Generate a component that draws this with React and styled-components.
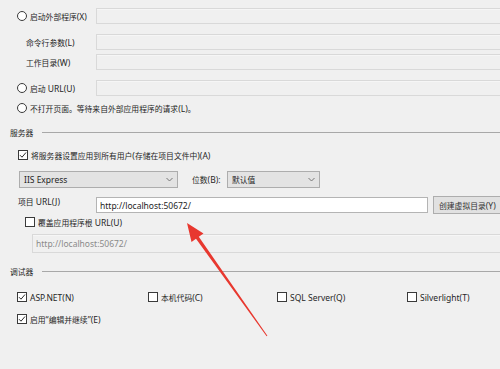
import React from "react";
import styled, { createGlobalStyle } from "styled-components";

const Global = createGlobalStyle`
  html, body { margin: 0; padding: 0; background: #f0f0f0; }
  body { font-family: "Noto Sans", "Noto Sans CJK SC", sans-serif; }
`;

const Page = styled.div`
  position: relative;
  width: 500px;
  height: 369px;
  overflow: hidden;
  background: #f0f0f0;
  color: #262626;
  font-size: 8.5px;
  padding-top: 8px;
  box-sizing: border-box;
`;

const Txt = styled.span`
  white-space: pre;
`;

const Cjk = styled.span`
  font-family: "Noto Sans CJK SC", sans-serif;
  font-size: 7.8px;
`;

const CJK_RE = /([\u2E80-\u9FFF\u3000-\u303F\uFF00-\uFFEF]+)/;

const T = ({ children }) => {
  const parts = String(children).split(CJK_RE);
  return (
    <Txt>
      {parts.map((p, i) =>
        p === "" ? null : CJK_RE.test(p) ? <Cjk key={i}>{p}</Cjk> : <React.Fragment key={i}>{p}</React.Fragment>
      )}
    </Txt>
  );
};

const Row = styled.div`
  display: flex;
  align-items: ${(p) => p.$align || "center"};
  height: ${(p) => p.$h || 16}px;
  margin-top: ${(p) => p.$mt || 0}px;
  padding-left: ${(p) => p.$pl || 0}px;
  white-space: nowrap;
`;

const LabelCell = styled.div`
  width: ${(p) => p.$w}px;
  flex: none;
  display: flex;
  padding-left: ${(p) => p.$pl || 0}px;
  box-sizing: border-box;
  align-self: stretch;
  align-items: ${(p) => (p.$top ? "flex-start" : "center")};
  padding-top: ${(p) => p.$pt || 0}px;
`;

const DisabledInput = styled.div`
  flex: none;
  width: ${(p) => p.$w || 420}px;
  height: ${(p) => p.$h || 16}px;
  box-sizing: border-box;
  border: 1px solid #d9d9d9;
  background: #f0f0f0;
  box-shadow: inset 0 1px 0 #f6f6f6;
  color: #8a8a8a;
  display: flex;
  align-items: center;
  padding-left: 3px;
`;

const TextInput = styled.div`
  flex: none;
  width: ${(p) => p.$w}px;
  height: ${(p) => p.$h}px;
  box-sizing: border-box;
  border: 1px solid #b4b4b4;
  background: #ffffff;
  display: flex;
  align-items: center;
  padding-left: 3px;
  color: #1e1e1e;
`;

const Radio = styled.span`
  width: 10px;
  height: 10px;
  flex: none;
  box-sizing: border-box;
  border: 1px solid #3a3a3a;
  border-radius: 50%;
  background: #fff;
  margin-right: 3px;
`;

const Box = styled.span`
  width: 10px;
  height: 10px;
  flex: none;
  box-sizing: border-box;
  border: 1px solid #3a3a3a;
  background: #fff;
  margin-right: 3px;
  display: flex;
  align-items: center;
  justify-content: center;
`;

const Check = ({ checked }) => (
  <Box>
    {checked && (
      <svg width="8" height="8" viewBox="0 0 8 8">
        <path d="M1 4.2 L3 6.2 L7 1.5" fill="none" stroke="#2a2a2a" strokeWidth="1" />
      </svg>
    )}
  </Box>
);

const Header = styled.div`
  display: flex;
  align-items: center;
  height: 16px;
  margin-top: ${(p) => p.$mt}px;
  padding-left: 10px;
  white-space: nowrap;
`;

const HeaderLine = styled.div`
  flex: 1;
  height: 1px;
  background: #a8a8a8;
  margin-left: 9px;
`;

const Combo = styled.div`
  flex: none;
  width: ${(p) => p.$w}px;
  height: 17px;
  box-sizing: border-box;
  border: 1px solid #adadad;
  background: #e3e3e3;
  display: flex;
  align-items: center;
  justify-content: space-between;
  padding: 0 4px 0 4px;
`;

const Button = styled.div`
  flex: none;
  width: 80px;
  height: 18px;
  box-sizing: border-box;
  border: 1px solid #adadad;
  background: #e1e1e1;
  display: flex;
  align-items: center;
  padding-left: 5px;
  margin-left: 5px;
  color: #333;
`;

const Chevron = () => (
  <svg width="7" height="5" viewBox="0 0 7 5">
    <path d="M0.5 1 L3.5 4 L6.5 1" fill="none" stroke="#777" strokeWidth="1" />
  </svg>
);

const CheckItem = styled.div`
  display: flex;
  align-items: center;
  width: ${(p) => (p.$w ? `${p.$w}px` : "auto")};
  flex: none;
`;

const Overlay = styled.svg`
  position: absolute;
  left: 0;
  top: 0;
  pointer-events: none;
`;

export default function App() {
  return (
    <>
      <Global />
      <Page>
        <Row>
          <LabelCell $w={96} $pl={17}>
            <Radio />
            <T>启动外部程序(X)</T>
          </LabelCell>
          <DisabledInput />
        </Row>
        <Row $mt={10}>
          <LabelCell $w={96} $pl={26}><T>命令行参数(L)</T></LabelCell>
          <DisabledInput />
        </Row>
        <Row $mt={4}>
          <LabelCell $w={96} $pl={26}><T>工作目录(W)</T></LabelCell>
          <DisabledInput />
        </Row>
        <Row $mt={10}>
          <LabelCell $w={96} $pl={17}>
            <Radio />
            <T>启动 URL(U)</T>
          </LabelCell>
          <DisabledInput />
        </Row>
        <Row $mt={4} $pl={17}>
          <Radio />
          <T>不打开页面。等待来自外部应用程序的请求(L)。</T>
        </Row>

        <Header $mt={8}>
          <T>服务器</T>
          <HeaderLine />
        </Header>

        <Row $mt={7} $pl={18}>
          <Check checked />
          <T>将服务器设置应用到所有用户(存储在项目文件中)(A)</T>
        </Row>

        <Row $mt={8} $h={17} $pl={19}>
          <Combo $w={159}>
            <T>IIS Express</T>
            <Chevron />
          </Combo>
          <LabelCell $w={49} $pl={14}><T>位数(B):</T></LabelCell>
          <Combo $w={93}>
            <T>默认值</T>
            <Chevron />
          </Combo>
        </Row>

        <Row $mt={8} $h={18}>
          <LabelCell $w={96} $pl={18} $top $pt={0}><T>项目 URL(J)</T></LabelCell>
          <TextInput $w={332} $h={16}>http://localhost:50672/</TextInput>
          <Button><T>创建虚拟目录(Y)</T></Button>
        </Row>

        <Row $pl={25}>
          <Check />
          <T>覆盖应用程序根 URL(U)</T>
        </Row>

        <Row $mt={4} $h={19} $pl={32}>
          <DisabledInput $w={480} $h={19}>http://localhost:50672/</DisabledInput>
        </Row>

        <Header $mt={10}>
          <T>调试器</T>
          <HeaderLine />
        </Header>

        <Row $mt={10} $pl={17}>
          <CheckItem $w={131}>
            <Check checked />
            <T>ASP.NET(N)</T>
          </CheckItem>
          <CheckItem $w={129}>
            <Check />
            <T>本机代码(C)</T>
          </CheckItem>
          <CheckItem $w={130}>
            <Check />
            <T>SQL Server(Q)</T>
          </CheckItem>
          <CheckItem>
            <Check />
            <T>Silverlight(T)</T>
          </CheckItem>
        </Row>

        <Row $mt={6} $pl={17}>
          <Check checked />
          <T>启用“编辑并继续”(E)</T>
        </Row>

        <Overlay width="500" height="369" viewBox="0 0 500 369">
          <polygon
            points="187,223 203.5,233.5 198.8,236.8 267.4,335.7 266.6,336.3 196,238.8 191.5,242"
            fill="#e8382f"
          />
        </Overlay>
      </Page>
    </>
  );
}
